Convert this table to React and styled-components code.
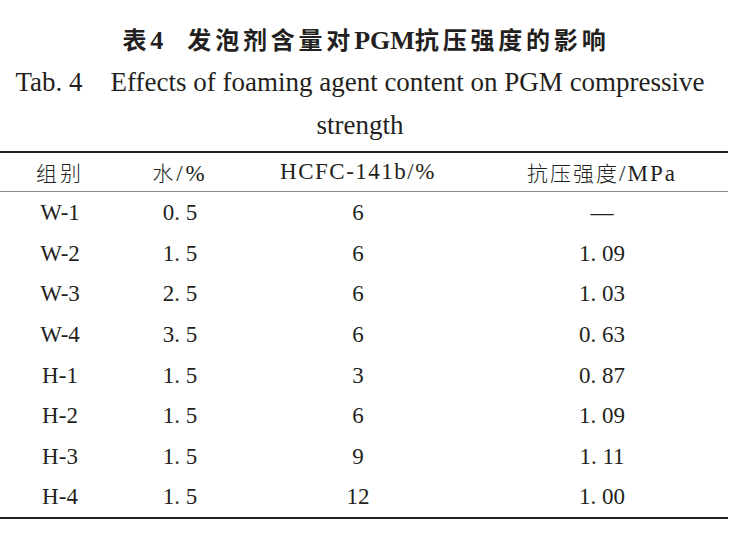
import React from "react";
import styled, { createGlobalStyle } from "styled-components";

const Global = createGlobalStyle`
  html, body { margin: 0; padding: 0; background: #ffffff; }
  body { color: #231f20; }
`;

const Page = styled.div`
  width: 728px;
  padding-top: 24px;
  display: flex;
  flex-direction: column;
  align-items: center;
`;

const Title = styled.h1`
  margin: 0;
  font-family: "Noto Sans CJK SC", sans-serif;
  font-weight: 700;
  font-size: 24px;
  line-height: 30px;
  letter-spacing: 3.8px;
  text-align: center;
  white-space: nowrap;
  padding-left: 4px;
`;

const SerifBold = styled.span`
  font-family: "Liberation Serif", serif;
  font-weight: 700;
  font-size: 26px;
  letter-spacing: 0;
`;

const Gap = styled.span`
  display: inline-block;
  width: ${(p) => p.$w}px;
`;

const Caption = styled.p`
  margin: 5px 0 0 0;
  width: 728px;
  font-family: "Liberation Serif", serif;
  font-size: 27px;
  line-height: 43px;
  text-align: center;
  padding-right: 8px;
  box-sizing: border-box;
`;

const Table = styled.div`
  width: 728px;
  margin-top: 4px;
  border-top: 2px solid #231f20;
  border-bottom: 2.5px solid #231f20;
`;

const Row = styled.div`
  display: grid;
  grid-template-columns: 120px 120px 236px 252px;
  height: ${(p) => (p.$head ? "39px" : "40.6px")};
  align-items: center;
  padding-top: ${(p) => (p.$head ? "0" : "2px")};
  box-sizing: border-box;
  border-bottom: ${(p) => (p.$head ? "1px solid #8a8a8a" : "none")};
`;

const Cell = styled.div`
  text-align: center;
  font-family: "Liberation Serif", serif;
  font-size: 23px;
  font-weight: 400;
  letter-spacing: ${(p) => (p.$ls ? p.$ls : "0")};
  white-space: nowrap;
`;

const Han = styled.span`
  font-family: "Noto Sans CJK SC", sans-serif;
  font-size: 21px;
  font-weight: 300;
`;

const rows = [
  ["W-1", "0. 5", "6", "—"],
  ["W-2", "1. 5", "6", "1. 09"],
  ["W-3", "2. 5", "6", "1. 03"],
  ["W-4", "3. 5", "6", "0. 63"],
  ["H-1", "1. 5", "3", "0. 87"],
  ["H-2", "1. 5", "6", "1. 09"],
  ["H-3", "1. 5", "9", "1. 11"],
  ["H-4", "1. 5", "12", "1. 00"],
];

export default function App() {
  return (
    <>
      <Global />
      <Page>
        <Title>
          表<SerifBold>4</SerifBold>
          <Gap $w={24} />
          发泡剂含量对<SerifBold>PGM</SerifBold>抗压强度的影响
        </Title>
        <Caption>
          Tab. 4<Gap $w={28} />Effects of foaming agent content on PGM compressive strength
        </Caption>
        <Table>
          <Row $head>
            <Cell $ls="3px"><Han>组别</Han></Cell>
            <Cell $ls="3px"><Han>水</Han>/%</Cell>
            <Cell $ls="1.5px">HCFC-141b/%</Cell>
            <Cell $ls="2px"><Han>抗压强度</Han>/MPa</Cell>
          </Row>
          {rows.map((r) => (
            <Row key={r[0]}>
              <Cell>{r[0]}</Cell>
              <Cell>{r[1]}</Cell>
              <Cell>{r[2]}</Cell>
              <Cell>{r[3]}</Cell>
            </Row>
          ))}
        </Table>
      </Page>
    </>
  );
}
